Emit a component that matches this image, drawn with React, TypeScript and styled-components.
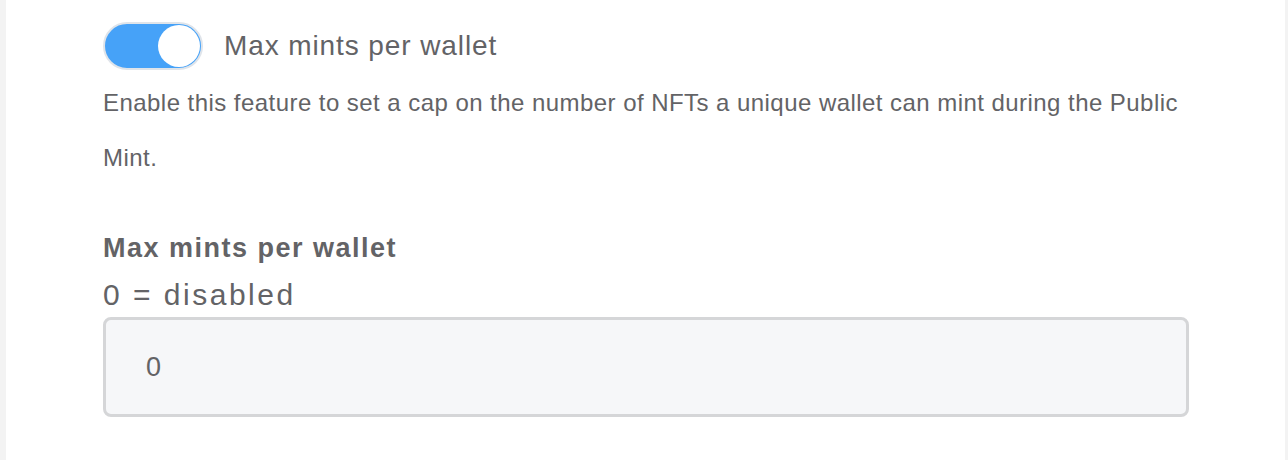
import styled, { createGlobalStyle } from "styled-components";

const GlobalStyle = createGlobalStyle`
  html, body {
    margin: 0;
    padding: 0;
    background: #f3f3f3;
  }
  body {
    font-family: "Liberation Sans", Arial, sans-serif;
  }
`

const Page = styled.div`
  height: 460px;
  padding: 0 3px 0 6px;
  box-sizing: border-box;
`

const Card = styled.div`
  background: #fff;
  height: 100%;
  padding: 22px 0 0 97px;
  box-sizing: border-box;
`

const ToggleRow = styled.div`
  display: flex;
  align-items: center;
  gap: 21px;
`

const Track = styled.div<{ on?: boolean }>`
  width: 100px;
  height: 48px;
  box-sizing: border-box;
  border-radius: 24px;
  border: 2px solid #dfe4ea;
  background: ${({ on }) => (on ? "#46a2f8" : "#e4e6ea")};
  display: flex;
  align-items: center;
  justify-content: ${({ on }) => (on ? "flex-end" : "flex-start")};
  padding: 0 1px;
`

const Knob = styled.div`
  width: 42px;
  height: 42px;
  border-radius: 50%;
  background: #fff;
`

const ToggleLabel = styled.span`
  font-size: 28px;
  line-height: 34px;
  color: #636366;
  letter-spacing: 0.9px;
`

const Description = styled.p`
  margin: 5px 0 0;
  width: 1090px;
  font-size: 24px;
  line-height: 55px;
  color: #636366;
  letter-spacing: 0.45px;
`

const Field = styled.div`
  margin-top: 48px;
  width: 1086px;
`

const FieldTitle = styled.div`
  font-size: 27px;
  line-height: 30px;
  font-weight: bold;
  color: #636366;
  letter-spacing: 1.5px;
`

const FieldHint = styled.div`
  font-size: 30px;
  line-height: 34px;
  color: #636366;
  letter-spacing: 2.5px;
  margin-top: 15px;
`

const Input = styled.input`
  display: block;
  width: 100%;
  height: 100px;
  margin-top: 5px;
  box-sizing: border-box;
  border: 3px solid #d5d6d8;
  border-radius: 8px;
  background: #f6f7f9;
  padding: 0 40px;
  font-family: "Liberation Sans", Arial, sans-serif;
  font-size: 27px;
  color: #636366;
  outline: none;
`

export default function App() {
  return (
    <>
      <GlobalStyle />
      <Page>
        <Card>
          <ToggleRow>
            <Track on>
              <Knob />
            </Track>
            <ToggleLabel>Max mints per wallet</ToggleLabel>
          </ToggleRow>
          <Description>
            Enable this feature to set a cap on the number of NFTs a unique wallet can mint during the Public Mint.
          </Description>
          <Field>
            <FieldTitle>Max mints per wallet</FieldTitle>
            <FieldHint>0 = disabled</FieldHint>
            <Input defaultValue="0" />
          </Field>
        </Card>
      </Page>
    </>
  );
}
